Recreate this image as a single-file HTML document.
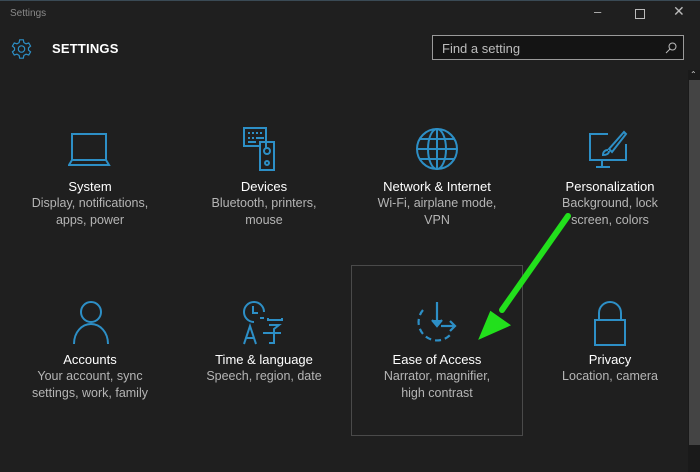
<!DOCTYPE html>
<html><head><style>
body{margin:0;width:700px;height:472px;background:#1f1f1f;overflow:hidden;font-family:"Liberation Sans",sans-serif;position:relative}
.t{position:absolute;left:10px;top:8px;font-size:10px;color:#8a8a8a}
.ctl{position:absolute;top:4px;color:#bbb;font-size:13px}
.h{position:absolute;left:52px;top:41px;color:#fff;font-size:13px;font-weight:bold;letter-spacing:0.2px}
.search{position:absolute;left:432px;top:35px;width:252px;height:25px;border:1px solid #9a9a9a;background:#141414;box-sizing:border-box}
.search span{position:absolute;left:9px;top:5px;color:#bdbdbd;font-size:13px}
.it{position:absolute;width:172px;text-align:center}
.it b{display:block;font-weight:normal;color:#fff;font-size:13px;line-height:17px}
.it i{display:block;font-style:normal;color:#b5b5b5;font-size:12.5px;line-height:17px}
svg.ic{position:absolute}
</style></head><body>
<div style="position:absolute;left:0;top:0;width:700px;height:1px;background:#3a4a55"></div>
<div class="t">Settings</div>
<div class="ctl" style="left:594px">–</div>
<div style="position:absolute;left:635px;top:9px;width:8px;height:8px;border:1px solid #bbb"></div>
<div class="ctl" style="left:673px;top:3px;font-size:14px">✕</div>
<svg class="ic" style="left:10px;top:38px" width="23" height="22" viewBox="0 0 24 24" fill="none" stroke="#2d8fc6" stroke-width="1.3"><circle cx="12" cy="12" r="3.5"/><path d="M10 2h4l.6 3 2.4 1.4 2.9-1 2 3.4-2.3 2v2.4l2.3 2-2 3.4-2.9-1L14.6 19 14 22h-4l-.6-3L7 17.6l-2.9 1-2-3.4 2.3-2v-2.4l-2.3-2 2-3.4 2.9 1L9.4 5z"/></svg>
<div class="h">SETTINGS</div>
<div class="search"><span>Find a setting</span><svg style="position:absolute;right:6px;top:6px" width="12" height="12" viewBox="0 0 12 12" fill="none" stroke="#bbb"><circle cx="7.5" cy="4.5" r="3.5"/><path d="M5 7l-4 4"/></svg></div>
<div style="position:absolute;left:688px;top:70px;width:12px;height:402px;background:#1a1a1a"></div>
<div style="position:absolute;left:690px;top:70px;font-size:8px;color:#ccc">⌃</div>
<div style="position:absolute;left:689px;top:80px;width:11px;height:365px;background:#444"></div>
<div style="position:absolute;left:351px;top:265px;width:172px;height:171px;border:1px solid #4a4a4a;box-sizing:border-box"></div>

<svg class="ic" style="left:68px;top:130px" width="46" height="40" fill="none" stroke="#2d8fc6" stroke-width="2"><rect x="4" y="4" width="34" height="26"/><path d="M1 35h40l-3-5H4z"/></svg>
<svg class="ic" style="left:240px;top:126px" width="48" height="46" fill="none" stroke="#2d8fc6" stroke-width="2"><path d="M26 22V2H4v18h16"/><path d="M8 7h2M12 7h2M16 7h2M20 7h2M8 12h2M12 12h2M16 12h8M8 16h8"/><rect x="20" y="16" width="14" height="28"/><circle cx="27" cy="25" r="3"/><circle cx="27" cy="37" r="2"/></svg>
<svg class="ic" style="left:413px;top:126px" width="48" height="46" fill="none" stroke="#2d8fc6" stroke-width="2"><circle cx="24" cy="23" r="20"/><ellipse cx="24" cy="23" rx="9" ry="20"/><path d="M4 23h40M7 13h34M7 33h34M24 3v40"/></svg>
<svg class="ic" style="left:586px;top:128px" width="48" height="44" fill="none" stroke="#2d8fc6" stroke-width="2"><path d="M22 6H4v26h36V16"/><path d="M16 32v7M10 39h14"/><path d="M38 4l2 2-14 18-3-3z"/><path d="M22 22c-3 0-5 2-5 5 3 0 6-1 6-4"/></svg>
<div class="it" style="left:4px;top:178px"><b>System</b><i>Display, notifications,<br>apps, power</i></div>
<div class="it" style="left:178px;top:178px"><b>Devices</b><i>Bluetooth, printers,<br>mouse</i></div>
<div class="it" style="left:351px;top:178px"><b>Network &amp; Internet</b><i>Wi-Fi, airplane mode,<br>VPN</i></div>
<div class="it" style="left:524px;top:178px"><b>Personalization</b><i>Background, lock<br>screen, colors</i></div>
<svg class="ic" style="left:70px;top:300px" width="44" height="46" fill="none" stroke="#2d8fc6" stroke-width="2"><circle cx="21" cy="12" r="10"/><path d="M4 44c0-12 8-20 17-20s17 8 17 20"/></svg>
<svg class="ic" style="left:240px;top:300px" width="50" height="46" fill="none" stroke="#2d8fc6" stroke-width="2"><path d="M14 22A10 10 0 1 1 24 12"/><path d="M13 6v7h5"/><path d="M4 44l6-18 6 18M6 38h8"/><path d="M20 18h4M28 18v2h14v-2M29 25h10l-5 4v14h-5M23 33h18"/></svg>
<svg class="ic" style="left:413px;top:300px" width="50" height="46" fill="none" stroke="#2d8fc6" stroke-width="2.2"><path d="M10 10A17 17 0 1 0 38 34" stroke-dasharray="6 4"/><path d="M24 2v24"/><path d="M19 20l5 6 5-6" fill="#2d8fc6"/><path d="M28 26h14"/><path d="M37 21l5 5-5 5"/></svg>
<svg class="ic" style="left:593px;top:300px" width="36" height="46" fill="none" stroke="#2d8fc6" stroke-width="2"><path d="M6 20v-7a11 11 0 0 1 22 0v7"/><rect x="2" y="20" width="30" height="25"/></svg>
<div class="it" style="left:4px;top:351px"><b>Accounts</b><i>Your account, sync<br>settings, work, family</i></div>
<div class="it" style="left:178px;top:351px"><b>Time &amp; language</b><i>Speech, region, date</i></div>
<div class="it" style="left:351px;top:351px"><b>Ease of Access</b><i>Narrator, magnifier,<br>high contrast</i></div>
<div class="it" style="left:524px;top:351px"><b>Privacy</b><i>Location, camera</i></div>
<svg class="ic" style="left:0;top:0" width="700" height="472"><path d="M568 216L502 310" stroke="#22e01c" stroke-width="6" stroke-linecap="round"/><path d="M481 337l27-12-17-12z" fill="#22e01c" stroke="#22e01c" stroke-width="3"/></svg>
</body></html>
